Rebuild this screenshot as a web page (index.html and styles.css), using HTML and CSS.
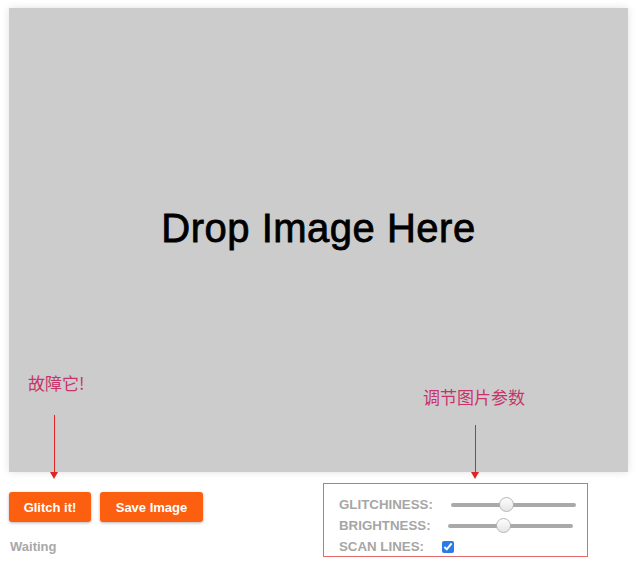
FILE: index.html
```html
<!DOCTYPE html>
<html>
<head>
    <title>Glitch</title>
    <link rel="stylesheet" href="styles.css">
</head>
<body>
    <div class="drop-zone">
        <p class="drop-text">Drop Image Here</p>
        <span class="note note-glitch">故障它!</span>
        <span class="note note-params">调节图片参数</span>
        <span class="arrow arrow-glitch"></span>
        <span class="arrow arrow-params"></span>
    </div>
    <div class="bottom">
        <div class="actions">
            <div class="buttons">
                <button class="btn btn-glitch">Glitch it!</button>
                <button class="btn btn-save">Save Image</button>
            </div>
            <p class="status">Waiting</p>
        </div>
        <div class="controls">
            <div class="row">
                <label>GLITCHINESS:</label>
                <input type="range" class="slider slider-a" min="0" max="100" value="44">
            </div>
            <div class="row">
                <label>BRIGHTNESS:</label>
                <input type="range" class="slider slider-b" min="0" max="100" value="44">
            </div>
            <div class="row">
                <label>SCAN LINES:</label>
                <input type="checkbox" class="check" checked>
            </div>
        </div>
    </div>
</body>
</html>
```

FILE: styles.css
```css
body {
    margin: 0;
    padding: 8px 0 0 9px;
    font-family: "Liberation Sans", Arial, sans-serif;
    background-color: #fff;
}
.drop-zone {
    position: relative;
    width: 619px;
    height: 464px;
    background-color: #cccccc;
    box-shadow: 0 0 8px rgba(0, 0, 0, 0.12);
    display: flex;
    align-items: center;
    justify-content: center;
    box-sizing: border-box;
    padding-bottom: 24px;
}
.drop-text {
    margin: 0;
    font-size: 40px;
    color: #000;
    -webkit-text-stroke: 0.8px #000;
    letter-spacing: 0.5px;
}
.note {
    position: absolute;
    font-family: "Noto Sans CJK SC", sans-serif;
    font-size: 17px;
    color: #c8346a;
}
.note-glitch {
    left: 19px;
    top: 362px;
}
.note-params {
    left: 414px;
    top: 376px;
}
.arrow {
    position: absolute;
    width: 1px;
    background-color: #e02424;
}
.arrow::after {
    content: "";
    position: absolute;
    left: -4px;
    bottom: -2px;
    border-left: 4.5px solid transparent;
    border-right: 4.5px solid transparent;
    border-top: 7px solid #e02424;
}
.arrow-glitch {
    left: 45px;
    top: 407px;
    height: 62px;
}
.arrow-params {
    left: 466px;
    top: 417px;
    height: 52px;
}
.bottom {
    display: flex;
}
.actions {
    width: 314px;
}
.buttons {
    display: flex;
    gap: 9px;
    margin-top: 20px;
}
.btn {
    height: 30px;
    border: none;
    border-radius: 3px;
    background-color: #fb5f0f;
    color: #fff;
    font-family: "Liberation Sans", Arial, sans-serif;
    font-weight: bold;
    font-size: 13px;
    box-shadow: 0 1px 3px rgba(0, 0, 0, 0.3);
    cursor: pointer;
}
.btn-glitch {
    width: 82px;
}
.btn-save {
    width: 103px;
}
.status {
    margin: 17px 0 0 1px;
    font-size: 13px;
    font-weight: bold;
    color: #a8a8a8;
}
.controls {
    margin-top: 11px;
    width: 265px;
    height: 74px;
    border: 1.5px solid #e26a6a;
    padding: 10px 0 0 15px;
    box-sizing: border-box;
}
.row {
    display: flex;
    align-items: center;
    height: 21px;
}
.row label {
    font-size: 13.3px;
    font-weight: bold;
    color: #a6a6a6;
}
.slider {
    -webkit-appearance: none;
    appearance: none;
    width: 125px;
    height: 16px;
    margin: 0;
    background: transparent;
}
.slider::-webkit-slider-runnable-track {
    height: 4px;
    border-radius: 2px;
    background-color: #a9a9a9;
}
.slider::-webkit-slider-thumb {
    -webkit-appearance: none;
    width: 15px;
    height: 15px;
    margin-top: -5.5px;
    border-radius: 50%;
    background: linear-gradient(#fdfdfd, #e6e6e6);
    border: 1px solid #b5b5b5;
    box-sizing: border-box;
}
.slider-a {
    margin-left: 18px;
}
.slider-b {
    margin-left: 17px;
}
.check {
    margin: 0 0 0 18px;
    width: 12px;
    height: 12px;
    accent-color: #2a7be4;
}
```
